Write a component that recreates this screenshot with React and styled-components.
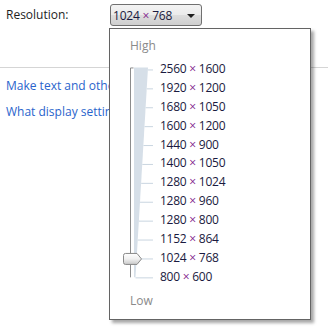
import React from 'react';
import styled, { createGlobalStyle } from 'styled-components';

const GlobalStyle = createGlobalStyle`
  html, body {
    margin: 0;
    padding: 0;
    background: #ffffff;
  }
  body {
    font-family: "Open Sans", "Liberation Sans", sans-serif;
    font-size: 12px;
    width: 328px;
    height: 332px;
    overflow: hidden;
  }
`;

const Page = styled.div`
  position: relative;
  width: 328px;
  height: 332px;
`;

const SettingRow = styled.div`
  display: flex;
  align-items: center;
  height: 22px;
  padding-top: 4px;
  padding-left: 6px;
`;

const Label = styled.span`
  width: 104px;
  color: #1e1e1e;
  line-height: 16px;
`;

const DropButton = styled.div`
  box-sizing: border-box;
  width: 92px;
  height: 22px;
  display: flex;
  align-items: center;
  justify-content: space-between;
  padding: 0 6px 0 2px;
  border: 1px solid #707070;
  border-radius: 3px;
  background: linear-gradient(#f3f3f3 0%, #ebebeb 50%, #dddddd 51%, #cfcfcf 100%);
  color: #1a1a40;
  letter-spacing: -0.2px;
`;

const Arrow = styled.span`
  width: 0;
  height: 0;
  border-left: 4px solid transparent;
  border-right: 4px solid transparent;
  border-top: 4px solid #1e1e1e;
  margin-top: 1px;
`;

const Rule = styled.div`
  height: 1px;
  background: #d5d5d5;
  margin-top: 41px;
`;

/* the open list covers the right part of the links */
const Links = styled.div`
  width: 103px;
  overflow: hidden;
  display: flex;
  flex-direction: column;
  gap: 10px;
  padding: 10px 0 0 6px;
`;

const LinkText = styled.a`
  color: #2a64cc;
  line-height: 16px;
  white-space: nowrap;
  text-decoration: none;
`;

const Panel = styled.div`
  position: absolute;
  left: 109px;
  top: 28px;
  box-sizing: border-box;
  width: 202px;
  height: 292px;
  background: #ffffff;
  border: 1px solid #646464;
  box-shadow: 3px 3px 3px rgba(0, 0, 0, 0.35);
  padding-left: 12px;
  display: flex;
  flex-direction: column;
`;

const Caption = styled.div`
  color: #8a8a8a;
  line-height: 16px;
  padding-left: 8px;
  margin-top: ${(p) => p.$top}px;
`;

const SliderArea = styled.div`
  display: flex;
  margin-top: 6px;
`;

const Options = styled.div`
  display: flex;
  flex-direction: column;
`;

const Option = styled.div`
  height: 18.9px;
  line-height: 18.9px;
  color: #1a1a40;
  white-space: nowrap;
  letter-spacing: -0.25px;
`;

const Times = styled.span`
  color: #80208a;
`;

const resolutions = [
  ['2560', '1600'],
  ['1920', '1200'],
  ['1680', '1050'],
  ['1600', '1200'],
  ['1440', '900'],
  ['1400', '1050'],
  ['1280', '1024'],
  ['1280', '960'],
  ['1280', '800'],
  ['1152', '864'],
  ['1024', '768'],
  ['800', '600'],
];

const ROW = 18.9;
const selected = 10;

function Track() {
  const top = ROW / 2;
  const bottom = ROW * 11 + ROW / 2;
  const thumbY = ROW * selected + ROW / 2;
  return (
    <svg width="38" height={ROW * 12} viewBox={`0 0 38 ${ROW * 12}`}>
      <defs>
        <linearGradient id="thumb" x1="0" y1="0" x2="0" y2="1">
          <stop offset="0" stopColor="#ffffff" />
          <stop offset="0.5" stopColor="#f0f0f0" />
          <stop offset="1" stopColor="#c8c8c8" />
        </linearGradient>
      </defs>
      <polygon
        points={`12,${top - 2} 26,${top - 2} 13.5,${bottom} 12,${bottom}`}
        fill="#d6dfe8"
      />
      {resolutions.map((r, i) => {
        const y = ROW * i + ROW / 2;
        const edge = 26 - (12.5 * i) / 11;
        return (
          <line key={i} x1={edge} y1={y + 0.5} x2="31" y2={y + 0.5} stroke="#c9d5e0" strokeWidth="1" />
        );
      })}
      <path
        d={`M8.5 ${bottom} V${top - 1.5} H11.5`}
        fill="none"
        stroke="#8c8c8c"
        strokeWidth="1"
      />
      <path
        d={`M3.5 ${thumbY - 5} H15 L19.5 ${thumbY + 0.5} L15 ${thumbY + 6} H3.5 Q1.5 ${thumbY + 6} 1.5 ${thumbY + 4} V${thumbY - 3} Q1.5 ${thumbY - 5} 3.5 ${thumbY - 5} Z`}
        fill="url(#thumb)"
        stroke="#8a8a8a"
        strokeWidth="1"
      />
    </svg>
  );
}

export default function App() {
  return (
    <Page>
      <GlobalStyle />
      <SettingRow>
        <Label>Resolution:</Label>
        <DropButton>
          <span>
            1024 <Times>×</Times> 768
          </span>
          <Arrow />
        </DropButton>
      </SettingRow>
      <Rule />
      <Links>
        <LinkText>Make text and other items larger or smaller</LinkText>
        <LinkText>What display settings should I choose?</LinkText>
      </Links>
      <Panel>
        <Caption $top={9}>High</Caption>
        <SliderArea>
          <Track />
          <Options>
            {resolutions.map(([w, h], i) => (
              <Option key={i}>
                {w} <Times>×</Times> {h}
              </Option>
            ))}
          </Options>
        </SliderArea>
        <Caption $top={6}>Low</Caption>
      </Panel>
    </Page>
  );
}
